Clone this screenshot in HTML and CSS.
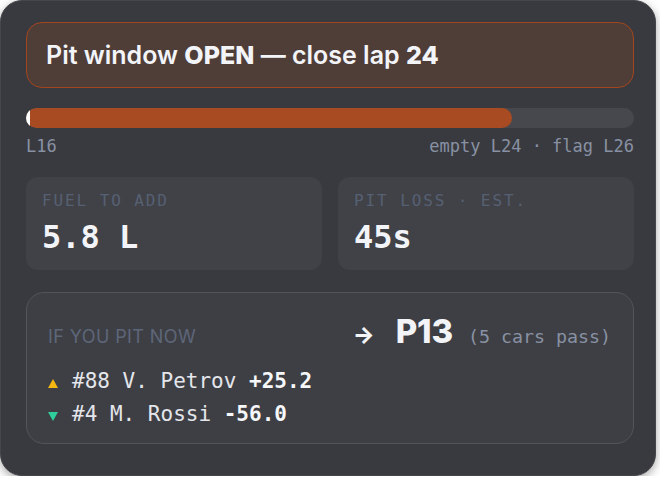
FILE: index.html
```html
<!DOCTYPE html>
<html lang="en">
<head>
  <meta charset="UTF-8" />
  <meta name="viewport" content="width=device-width, initial-scale=1.0"/>
  <title>Pit Strategy</title>
  <link rel="stylesheet" href="styles.css">
</head>
<body>
  <div class="card">
    <div class="banner">
      <span>Pit window <b>OPEN</b> — close lap <b>24</b></span>
    </div>

    <div class="track">
      <div class="fill" style="width: 80%;"></div>
      <span class="now"></span>
    </div>
    <div class="track-labels">
      <span>L16</span>
      <span>empty L24 · flag L26</span>
    </div>

    <div class="stats">
      <div class="stat">
        <div class="stat-label">FUEL TO ADD</div>
        <div class="stat-value">5.8 L</div>
      </div>
      <div class="stat">
        <div class="stat-label">PIT LOSS · EST.</div>
        <div class="stat-value">45s</div>
      </div>
    </div>

    <div class="projection">
      <div class="projection-head">
        <span class="projection-title">IF YOU PIT NOW</span>
        <span class="projection-result">
          <span class="arrow">→</span>
          <span class="pos">P13</span>
          <span class="note">(5 cars pass)</span>
        </span>
      </div>
      <div class="car">
        <svg class="tri" width="10" height="9" viewBox="0 0 10 9"><path d="M5 0 L10 9 L0 9 Z" fill="#f5b512"/></svg>
        <span>#88 V. Petrov <b>+25.2</b></span>
      </div>
      <div class="car">
        <svg class="tri" width="10" height="9" viewBox="0 0 10 9"><path d="M0 0 L10 0 L5 9 Z" fill="#2fcf9c"/></svg>
        <span>#4 M. Rossi <b>-56.0</b></span>
      </div>
    </div>
  </div>
</body>
</html>
```

FILE: styles.css
```css
body {
  margin: 0;
  background: #ffffff;
  font-family: 'Inter', sans-serif;
}
.card {
  box-sizing: border-box;
  width: 656px;
  height: 476px;
  padding: 21px 21px 0 25px;
  background: #393a3f;
  border: 1px solid #45464b;
  border-radius: 22px;
  box-shadow: 0 3px 10px rgba(0, 0, 0, 0.35);
}
.banner {
  box-sizing: border-box;
  height: 66px;
  display: flex;
  align-items: center;
  padding: 0 19px;
  background: #4f3d38;
  border: 1.5px solid #a3461f;
  border-radius: 16px;
  color: #f2f4f8;
  font-size: 25px;
  font-weight: 600;
}
.banner b {
  font-weight: 800;
}
.track {
  position: relative;
  height: 20px;
  margin-top: 20px;
  background: #47484d;
  border-radius: 10px;
  overflow: hidden;
}
.fill {
  height: 100%;
  background: #a94b22;
  border-radius: 10px;
}
.now {
  position: absolute;
  left: 0;
  top: 0;
  width: 4px;
  height: 100%;
  background: #ffffff;
}
.track-labels {
  display: flex;
  justify-content: space-between;
  margin-top: 8px;
  font-family: 'DejaVu Sans Mono', monospace;
  font-size: 17px;
  line-height: 20px;
  color: #8891a3;
}
.stats {
  display: grid;
  grid-template-columns: 1fr 1fr;
  gap: 16px;
  margin-top: 21px;
}
.stat {
  height: 93px;
  box-sizing: border-box;
  padding: 14px 16px;
  background: #414247;
  border-radius: 12px;
  font-family: 'DejaVu Sans Mono', monospace;
}
.stat-label {
  font-size: 16px;
  line-height: 20px;
  letter-spacing: 1.9px;
  color: #566073;
}
.stat-value {
  margin-top: 8px;
  font-size: 32px;
  line-height: 36px;
  font-weight: bold;
  color: #f2f4f8;
}
.projection {
  margin-top: 22px;
  height: 152px;
  box-sizing: border-box;
  padding: 18px 22px 0 21px;
  background: #3e3f44;
  border: 1.5px solid #54555a;
  border-radius: 18px;
}
.projection-head {
  display: flex;
  justify-content: space-between;
  align-items: baseline;
}
.projection-title {
  font-size: 18px;
  font-weight: 400;
  letter-spacing: 0.4px;
  color: #5d6679;
}
.projection-result {
  display: flex;
  align-items: baseline;
  color: #f2f4f8;
}
.arrow {
  font-size: 23px;
  font-weight: 800;
  margin-right: 21px;
}
.pos {
  font-size: 33px;
  font-weight: 800;
  letter-spacing: -0.2px;
  margin-right: 15px;
}
.note {
  font-family: 'DejaVu Sans Mono', monospace;
  font-size: 18.3px;
  color: #8891a3;
}
.car {
  display: flex;
  align-items: center;
  gap: 14px;
  height: 33px;
  font-family: 'DejaVu Sans Mono', monospace;
  font-size: 21px;
  color: #e4e6ec;
}
.projection-head + .car {
  margin-top: 13px;
}
.car b {
  color: #f6f7fa;
}
.tri {
  margin-top: 6px;
}
```
